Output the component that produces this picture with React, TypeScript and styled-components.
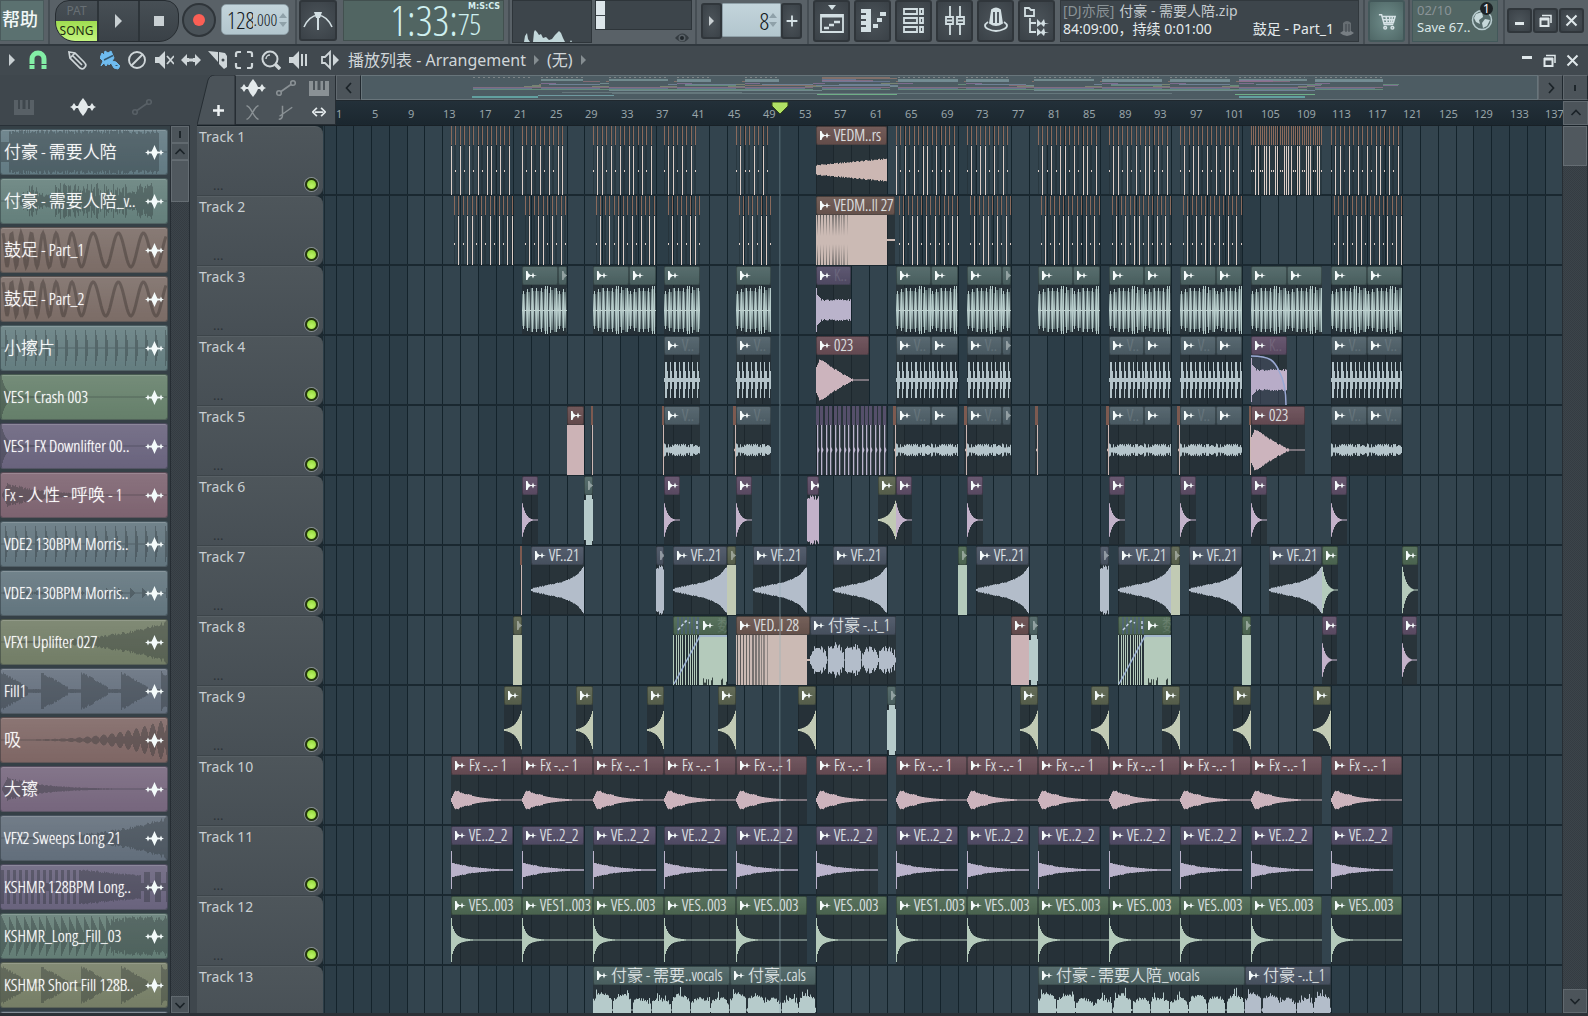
import React from "react";
import styled, { createGlobalStyle, css } from "styled-components";

const NARROW = '"Open Sans Condensed Light", "Open Sans Condensed", "Roboto Condensed", Roboto, "Noto Sans CJK SC", sans-serif';
const WIDE = '"Noto Sans", "Noto Sans CJK SC", sans-serif';

const BAR = 8.89;
const ORIGIN = 12.5;
const barX = (bar: number) => Math.round(ORIGIN + bar * BAR);

const GlobalStyle = createGlobalStyle`
  * { box-sizing: border-box; }
  body { margin: 0; background: #3f474d; font-family: ${WIDE}; color: #d3dadd; overflow: hidden; }
  button { font: inherit; color: inherit; padding: 0; border: 0; background: none; cursor: pointer; }
  input { font: inherit; color: inherit; padding: 0; border: 0; background: none; min-width: 0; outline: none; }
  svg { display: block; flex: none; }
  ul, ol { list-style: none; margin: 0; padding: 0; }
  h1 { margin: 0; font: inherit; }
`;

/* ------------------------------------------------------------------ */
/* Shell                                                               */
/* ------------------------------------------------------------------ */

const Shell = styled.div`
  height: 100vh;
  display: flex;
  flex-direction: column;
  background: #3f474d;
  border-bottom: 3px solid #2c3137;
  overflow: hidden;
`;

const TopBar = styled.header`
  display: flex;
  align-items: flex-start;
  height: 46px;
  flex: none;
  background: #596167;
  border-bottom: 2px solid #30383e;
`;

const Divider = styled.i`
  width: 2px;
  height: 44px;
  background: #464e54;
  flex: none;
`;

const HelpButton = styled.button`
  width: 44px;
  height: 41px;
  margin-right: 4px;
  padding: 0 4px 3px 0;
  background: #5b7170;
  border: 1px solid #4a5a5c;
  color: #f2f8f8;
  font-size: 18px;
  font-weight: 500;
  line-height: 34px;
  flex: none;
`;

const Transport = styled.div`
  display: flex;
  width: 124px;
  height: 42px;
  margin: 0 3px 0 5px;
  border: 1px solid #262c31;
  border-radius: 14px 14px 20px 20px;
  background: linear-gradient(#474f55, #3a4147);
  overflow: hidden;
  flex: none;
`;

const ModeSwitch = styled.div`
  display: flex;
  flex-direction: column;
  width: 41px;
  font-size: 12px;
  line-height: 20px;
`;

const ModeButton = styled.button<{ $on?: boolean }>`
  flex: 1;
  color: ${(p) => (p.$on ? "#1f2c12" : "#676f74")};
  background: ${(p) => (p.$on ? "linear-gradient(#9fdc50, #c3f57e)" : "none")};
`;

const TransportButton = styled.button`
  flex: 1;
  display: grid;
  place-items: center;
  border-left: 2px solid #2d3439;
`;

const RecordButton = styled.button`
  width: 34px;
  height: 34px;
  margin: 3px 5px 0 0;
  border: 2px solid #2f353a;
  border-radius: 50%;
  background: #4a5258;
  display: grid;
  place-items: center;
  flex: none;
`;

const ValueBox = styled.label<{ $w: number; $square?: boolean }>`
  display: flex;
  align-items: center;
  width: ${(p) => p.$w}px;
  height: ${(p) => (p.$square ? 34 : 31)}px;
  padding: 0 1px 0 5px;
  background: linear-gradient(#c3d4db, #b3c6ce);
  border: 1px solid #8fa0a8;
  border-radius: ${(p) => (p.$square ? 1 : 5)}px;
  color: #14191c;
  font-family: ${NARROW};
  font-weight: 300;
  flex: none;
`;

const ValueInput = styled.input<{ $size: number; $w: number; $right?: boolean }>`
  font-size: ${(p) => p.$size}px;
  width: ${(p) => p.$w}px;
  text-align: ${(p) => (p.$right ? "right" : "left")};
`;

const IconButton = styled.button<{ $w: number; $h?: number; $tone?: "teal" }>`
  width: ${(p) => p.$w}px;
  height: ${(p) => p.$h ?? 42}px;
  display: grid;
  place-items: center;
  background: ${(p) => (p.$tone ? "radial-gradient(#6f8d8b, #4f6766)" : "radial-gradient(#4c545a, #3a4147)")};
  border: 2px solid ${(p) => (p.$tone ? "#43585a" : "#30363b")};
  border-radius: 3px;
  color: #d6e2e6;
  flex: none;
`;

const MapButton = styled.button`
  width: 25px;
  height: 25px;
  display: grid;
  place-items: center;
  background: #4c545a;
  border: 1px solid #61696f;
  border-right-color: #20282e;
  flex: none;
`;

const TimePanel = styled.div`
  display: flex;
  align-items: flex-start;
  width: 161px;
  height: 41px;
  padding: 0 3px 0 0;
  background: #516562;
  border: 1px solid #42504f;
  color: #cff0f0;
  font-family: ${NARROW};
  font-weight: 300;
  font-size: 42px;
  line-height: 38px;
  justify-content: flex-end;
  flex: none;
`;

const TimeSide = styled.div`
  width: 42px;
  font-size: 29px;
  line-height: 26px;
`;

const TimeUnits = styled.div`
  font: bold 8px/9px "DejaVu Sans", sans-serif;
  text-align: right;
  padding-top: 1px;
  color: #d6eeee;
`;

const Scope = styled.div`
  width: 80px;
  height: 43px;
  background: #3d454b;
  border: 1px solid #2e353a;
  flex: none;
`;

const MeterColumn = styled.div`
  width: 97px;
  display: flex;
  flex-direction: column;
  align-items: flex-end;
  gap: 2px;
  flex: none;
`;

const Meter = styled.div`
  width: 97px;
  height: 30px;
  background: #3d454b;
  border: 1px solid #2e353a;
  display: flex;
  flex-direction: column;
  gap: 1px;
`;

const MeterCell = styled.i`
  width: 9px;
  height: 14px;
  background: #dde6ea;
`;

const Group = styled.div<{ $gap?: number; $pad?: string }>`
  display: flex;
  gap: ${(p) => p.$gap ?? 0}px;
  padding: ${(p) => p.$pad ?? "0"};
  flex: none;
`;

const HintPanel = styled.section`
  flex: 1;
  min-width: 0;
  height: 42px;
  margin-left: 5px;
  padding: 1px 3px 0 2px;
  background: #3d454b;
  border: 1px solid #31383d;
  font-size: 14px;
  line-height: 18px;
  white-space: nowrap;
  color: #c5cbcf;
`;

const HintRow = styled.div<{ $bright?: boolean }>`
  display: flex;
  align-items: center;
  height: 18px;
  gap: 5px;
  color: ${(p) => (p.$bright ? "#e4eaec" : "#c5cbcf")};
`;

const Dim = styled.span`
  color: #8a9397;
`;

const Spacer = styled.span`
  flex: 1;
`;

const SavePanel = styled.section`
  display: flex;
  width: 86px;
  height: 42px;
  padding: 1px 2px 0 4px;
  background: #526664;
  border: 1px solid #43585a;
  font-size: 13px;
  line-height: 17px;
  color: #dbe8e8;
  white-space: nowrap;
  flex: none;
`;

const SaveText = styled.div`
  width: 54px;
`;

const GlobeWrap = styled.div`
  position: relative;
  padding-top: 7px;
`;

const Badge = styled.span`
  position: absolute;
  top: 0;
  right: 0;
  width: 13px;
  height: 13px;
  border-radius: 50%;
  background: #1d2326;
  color: #fff;
  font-size: 12px;
  line-height: 13px;
  text-align: center;
`;

/* ------------------------------------------------------------------ */
/* Playlist title bar                                                  */
/* ------------------------------------------------------------------ */

const TitleBar = styled.nav`
  display: flex;
  align-items: center;
  height: 29px;
  padding: 0 4px 1px 5px;
  flex: none;
  background: #41494f;
  color: #cfd5d8;
`;

const Tool = styled.button<{ $w?: number; $tone?: string }>`
  width: ${(p) => p.$w ?? 27}px;
  height: 26px;
  display: grid;
  place-items: center;
  color: ${(p) => p.$tone ?? "#cfd6d9"};
  flex: none;
`;

const Crumb = styled.h1`
  font-size: 16px;
  line-height: 26px;
  white-space: nowrap;
  display: flex;
  align-items: center;
  gap: 8px;
  color: #d0d6d9;
`;

/* ------------------------------------------------------------------ */
/* Workspace                                                           */
/* ------------------------------------------------------------------ */

const Workspace = styled.main`
  flex: 1;
  min-height: 0;
  display: grid;
  grid-template-columns: 190px minmax(0, 1fr);
  column-gap: 7px;
  grid-template-rows: minmax(0, 1fr);
`;

const Picker = styled.aside`
  display: flex;
  flex-direction: column;
  min-height: 0;
`;

const PickerTabs = styled.div`
  display: flex;
  align-items: center;
  justify-content: space-between;
  height: 50px;
  padding: 14px 38px 0 14px;
  flex: none;
`;

const PlainButton = styled.button<{ $tone: string }>`
  color: ${(p) => p.$tone};
  display: grid;
  place-items: center;
`;

const PickerBody = styled.div`
  flex: 1;
  min-height: 0;
  display: grid;
  grid-template-columns: minmax(0, 1fr) 20px;
  border-top: 1px solid #283037;
`;

const PickerList = styled.ul`
  overflow: hidden;
  padding: 3px 2px 0 0;
  background: #354046;
  display: flex;
  flex-direction: column;
  gap: 3px;
`;

const PickerItem = styled.button<{ $c: string }>`
  position: relative;
  display: flex;
  align-items: center;
  width: 100%;
  height: 46px;
  padding: 0 3px 0 3px;
  border: 1px solid rgba(20, 30, 34, 0.35);
  border-radius: 3px;
  background: linear-gradient(rgba(255, 255, 255, 0.1), rgba(255, 255, 255, 0)) ${(p) => p.$c};
  box-shadow: inset 0 1px 0 rgba(255, 255, 255, 0.15);
  color: #ffffff;
  font-family: ${NARROW};
  font-weight: 300;
  font-size: 17px;
  line-height: 24px;
  text-shadow: 0 0 1px rgba(255, 255, 255, 0.8);
  text-align: left;
`;

const PickerWave = styled.svg`
  position: absolute;
  inset: 0;
  width: 100%;
  height: 100%;
`;

const PickerName = styled.span`
  position: relative;
  flex: 1;
  white-space: nowrap;
`;

const OnTop = styled.span`
  position: relative;
`;

const Scroll = styled.div<{ $w: number }>`
  width: ${(p) => p.$w}px;
  display: flex;
  flex-direction: column;
  background: repeating-conic-gradient(#353c42 0 25%, #3c444a 0 50%) 0 0 / 2px 2px;
  border-left: 1px solid #262d33;
  border-right: 1px solid #262d33;
`;

const ScrollButton = styled.button<{ $h: number; $w?: number }>`
  height: ${(p) => p.$h}px;
  ${(p) => p.$w && css`width: ${p.$w}px;`}
  background: #4c545a;
  border: 1px solid #61696f;
  box-shadow: 0 1px 0 #262d33;
  color: #1e262b;
  display: grid;
  place-items: center;
  flex: none;
`;

const Thumb = styled.div<{ $h: number }>`
  height: ${(p) => p.$h}px;
  background: #50585e;
  border: 1px solid #656d73;
  flex: none;
`;

const Playlist = styled.section`
  display: flex;
  flex-direction: column;
  min-width: 0;
  min-height: 0;
`;

const PlaylistHead = styled.div`
  display: grid;
  grid-template-columns: 38px 101px minmax(0, 1fr);
  height: 50px;
  flex: none;
`;

const AddTrack = styled.button`
  position: relative;
  color: #eef2f3;
`;

const TabShape = styled.svg`
  position: absolute;
  left: 0;
  top: 0;
`;

const PlusMark = styled.svg`
  position: relative;
  margin: 20px auto 0 16px;
`;

const ToolGrid = styled.div`
  display: grid;
  grid-template-columns: repeat(3, 1fr);
  grid-template-rows: 1fr 1fr;
  place-items: center;
  background: #4b5359;
  border: 1px solid #262d33;
  border-top-color: #666e74;
`;

const HeadRight = styled.div`
  display: flex;
  flex-direction: column;
  min-width: 0;
`;

const MinimapRow = styled.div`
  display: flex;
  height: 26px;
  border-bottom: 1px solid #20282e;
`;

const Minimap = styled.div`
  flex: 1;
  min-width: 0;
  overflow: hidden;
  background: #4d5c63;
  border: 1px solid #68757b;
`;

const RulerRow = styled.div`
  display: flex;
  height: 24px;
`;

const Ruler = styled.ol`
  position: relative;
  flex: 1;
  min-width: 0;
  overflow: hidden;
  background: linear-gradient(#233039, #1b272f);
  color: #98a4a9;
  font-size: 11px;
  line-height: 25px;
`;

const RulerMark = styled.li`
  position: absolute;
  top: 0;
`;

const Marker = styled.svg`
  position: absolute;
  top: 1px;
`;

const PlaylistBody = styled.div`
  flex: 1;
  min-height: 0;
  display: grid;
  grid-template-columns: minmax(0, 1fr) 26px;
  border-top: 1px solid #182127;
`;

const Canvas = styled.div`
  position: relative;
  overflow: hidden;
  background: #1c2930;
`;

const Backdrop = styled.svg`
  position: absolute;
  left: 126px;
  top: 0;
`;

const TrackRow = styled.div`
  display: grid;
  grid-template-columns: 126px minmax(0, 1fr);
  height: 70px;
`;

const TrackHead = styled.div`
  display: flex;
  flex-direction: column;
  justify-content: space-between;
  padding: 0 5px 4px 2px;
  background: linear-gradient(#4e565b, #474f55);
  border-top: 1px solid #575f64;
  border-bottom: 1px solid #3c4449;
  border-radius: 0 8px 8px 0;
  font-size: 14px;
  line-height: 20px;
  color: #c9cfd2;
`;

const TrackFoot = styled.div`
  display: flex;
  align-items: flex-end;
  justify-content: space-between;
  padding-left: 14px;
  color: #2c3338;
  font-size: 13px;
  line-height: 12px;
`;

const Led = styled.button`
  width: 13px;
  height: 13px;
  border-radius: 50%;
  background: radial-gradient(circle at 50% 70%, #c0f56a, #86d22f);
  border: 2px solid #23340f;
  box-shadow: 0 0 0 1px #8a9195;
`;

const Lane = styled.div`
  position: relative;
  border-bottom: 2px solid #1a2830;
`;

const ClipBox = styled.div`
  position: absolute;
  top: 0;
  height: 69px;
  overflow: hidden;
  background: rgba(36, 42, 46, 0.62);
`;

const ClipHead = styled.div<{ $c: string; $dim?: boolean }>`
  display: flex;
  align-items: center;
  gap: 3px;
  height: 19px;
  padding-left: 3px;
  border: 1px solid rgba(15, 22, 26, 0.35);
  border-radius: 2px;
  background: linear-gradient(rgba(255, 255, 255, 0.05), rgba(0, 0, 0, 0.08)) ${(p) => p.$c};
  color: #e6eced;
  font-family: ${NARROW};
  font-weight: 300;
  font-size: 16px;
  line-height: 17px;
  text-shadow: 0 0 1px rgba(230, 236, 237, 0.5);
  white-space: nowrap;
  svg { opacity: ${(p) => (p.$dim ? 0.4 : 1)}; }
`;

const ThinHead = styled.div<{ $c: string }>`
  height: 19px;
  background: ${(p) => p.$c};
`;

const ClipName = styled.span<{ $faint?: boolean }>`
  opacity: ${(p) => (p.$faint ? 0.14 : 1)};
`;

const Hits = styled.svg`
  position: absolute;
  top: 0;
`;

const Playhead = styled.i`
  position: absolute;
  top: 0;
  bottom: -2px;
  width: 2px;
  background: rgba(150, 175, 185, 0.3);
`;

/* ------------------------------------------------------------------ */
/* Icons                                                               */
/* ------------------------------------------------------------------ */

const Tri = ({ s = 6, c = "#c9d0d3" }: { s?: number; c?: string }) => (
  <svg width={s} height={s * 2} viewBox="0 0 6 12"><path d="M0 0L6 6L0 12Z" fill={c} /></svg>
);

const Spin = () => (
  <svg width="8" height="16" viewBox="0 0 8 16"><path d="M0 6L4 1L8 6ZM0 10H8L4 15Z" fill="#8fa1a9" /></svg>
);

const WaveIcon = ({ w = 20 }: { w?: number }) => (
  <svg width={w} height="18" viewBox="0 0 26 18" preserveAspectRatio="none" fill="currentColor">
    <path d="M0 9L2 8L4 5L6 8L8 8L10 4L13 0L16 4L18 8L20 8L22 5L24 8L26 9L24 10L22 13L20 10L18 10L16 14L13 18L10 14L8 10L6 10L4 13L2 10Z" />
  </svg>
);

const PickWave = () => (
  <svg width="19" height="15" viewBox="0 0 19 15" fill="#f4fbfb">
    <path d="M0 7.5L2 6.7L3 4.5L4 6.7L6.5 6.5L8 3.5L9.5 0L11 3.5L12.5 6.5L15 6.7L16 4.5L17 6.7L19 7.5L17 8.3L16 10.5L15 8.3L12.5 8.5L11 11.5L9.5 15L8 11.5L6.5 8.5L4 8.3L3 10.5L2 8.3Z" />
  </svg>
);

const ClipIcon = () => (
  <svg width="11" height="9" viewBox="0 0 11 9" fill="#f4fafa">
    <path d="M0 0H1.500L2.500 2.500L4.500 4H6L7 1.500L8 4L11 4.500L8 5L7 7.500L6 5H4.500L2.500 6.500L1.500 9H0Z" />
  </svg>
);

const AutoIcon = () => (
  <svg width="20" height="18" viewBox="0 0 20 18" fill="none" stroke="currentColor" strokeWidth="1.6">
    <circle cx="3" cy="14" r="2.3" /><circle cx="17" cy="4" r="2.3" /><path d="M5 12.5L15 5.5" />
  </svg>
);

const PianoIcon = () => (
  <svg width="20" height="15" viewBox="0 0 20 15" fill="currentColor">
    <path d="M0 0H4V9H6V0H8.500V9H11.500V0H14V9H16V0H20V15H0Z" />
  </svg>
);

const Chevron = ({ d }: { d: string }) => (
  <svg width="12" height="12" viewBox="0 0 12 12" fill="none" stroke="#1b2328" strokeWidth="1.700"><path d={d} /></svg>
);
const UP = "M1.500 8L6 3.500L10.500 8";
const DOWN = "M1.500 4L6 8.500L10.500 4";
const LEFT = "M8 1L3.500 6L8 11";
const RIGHT = "M4 1L8.500 6L4 11";

const Stroke = ({ s = 20, w = 2, children }: { s?: number; w?: number; children: React.ReactNode }) => (
  <svg width={s} height={s} viewBox="0 0 20 20" fill="none" stroke="currentColor" strokeWidth={w}>{children}</svg>
);

const WindowIcon = ({ kind }: { kind: "min" | "max" | "close" }) => (
  <svg width="13" height="13" viewBox="0 0 13 13" fill="none" stroke="#dfe7ea" strokeWidth="2">
    {kind === "min" && <path d="M2 9.500H11" strokeWidth="3" />}
    {kind === "max" && <><path d="M3 1.500H12V9" strokeWidth="1.500" /><path d="M1.500 5H9.500V12H1.500Z" /><path d="M1 5H10" strokeWidth="3" /></>}
    {kind === "close" && <path d="M1.500 1.500L11.500 11.500M11.500 1.500L1.500 11.500" />}
  </svg>
);

const SpeakerShape = <path d="M1 7H5L11 1V19L5 13H1Z" fill="currentColor" stroke="none" />;

const TOOLS: { name: string; w: number; tone?: string; icon: React.ReactNode }[] = [
  { name: "选项", w: 14, icon: <Tri /> },
  { name: "吸附", w: 38, tone: "#83eea6", icon: <Stroke w={5}><path d="M4 19V9a6 6 0 0 1 12 0V19" /><path d="M1 14.500H7M13 14.500H19" stroke="#41494f" strokeWidth="1.200" /></Stroke> },
  { name: "绘制", w: 40, icon: <Stroke w={1.7}><path d="M2 2L3 8L13 18Q16 20 18 17Q20 15 17 12L8 3Z" /><path d="M6 6L15 15M3 8L8 3" /></Stroke> },
  { name: "刷子", w: 26, tone: "#6fbcf0", icon: <Stroke w={1}><path d="M0 8L2 3L4 5L5 1L8 3L11 1L14 8L12 11L16 12L20 16L18 19L14 18L11 13L9 15L8 13L6 16L4 13L1 16L3 11Z" fill="currentColor" /><path d="M4 10L13 5.500" stroke="#33566d" strokeWidth="1.400" /><path d="M15.500 15.500H17.500" stroke="#33566d" /></Stroke> },
  { name: "删除", w: 27, icon: <Stroke w={1.9}><circle cx="10" cy="10" r="8" /><path d="M4.500 15.500L15.500 4.500" /></Stroke> },
  { name: "静音", w: 27, icon: <Stroke w={1.8}>{SpeakerShape}<path d="M13 6L20 14M20 6L13 14" /></Stroke> },
  { name: "滑移", w: 27, icon: <Stroke><path d="M0 10L6 4V8H8V12H6V16ZM20 10L14 4V8H12V12H14V16Z" fill="currentColor" stroke="none" /><path d="M8 10H12" strokeWidth="3" /></Stroke> },
  { name: "切片", w: 27, icon: <Stroke w={1.6}><path d="M0 1L10 12V2Z" fill="currentColor" stroke="none" /><path d="M11 2L17 3L19 6V17L16 19L11 14Z" fill="currentColor" stroke="none" /><circle cx="15" cy="10" r="1.500" fill="#41494f" stroke="none" /></Stroke> },
  { name: "选择", w: 26, icon: <Stroke w={2.2}><path d="M2 7V4Q2 2 4 2H7M13 2H16Q18 2 18 4V7M18 13V16Q18 18 16 18H13M7 18H4Q2 18 2 16V13" /></Stroke> },
  { name: "缩放", w: 27, icon: <Stroke w={2}><circle cx="9" cy="9" r="7.500" /><path d="M5 9A4 4 0 0 1 9 5" strokeWidth="1.400" /><path d="M14.500 14.500L19 19" strokeWidth="3.500" /></Stroke> },
  { name: "回放", w: 27, icon: <Stroke w={2}>{SpeakerShape}<path d="M14 4V16M18 4V16" /></Stroke> },
];

const MixBtn = ({ children, name }: { children: React.ReactNode; name: string }) => (
  <IconButton $w={37} aria-label={name}>
    <svg width="28" height="32" viewBox="0 0 28 32" fill="none" stroke="#d3dfe3" strokeWidth="1.800">{children}</svg>
  </IconButton>
);

/* ------------------------------------------------------------------ */
/* Wave forms                                                          */
/* ------------------------------------------------------------------ */

const noise = (i: number, seed = 1) => {
  const v = Math.sin(i * 12.9898 + seed * 78.233) * 43758.5453;
  return v - Math.floor(v);
};

type Env = (x: number, w: number) => number;

const lumps = (t: number, n: number, seed: number) => {
  const k = Math.floor(t * n);
  const f = t * n - k;
  const amp = 0.65 + 0.35 * noise(k, seed);
  return f > 0.93 ? 0.03 : amp * Math.pow(Math.sin(Math.PI * Math.min(1, f * 0.85 + 0.12)), 0.45);
};

const ENVELOPES: Record<string, Env> = {
  riser: (x, w) => 4 + 6.5 * (x / w) + noise(x) * 1.5,
  block: () => 25,
  bump: (x, w) => (x < 2 ? 20 : x > w - 2 ? 21 : 25),
  rough: (x) => 20 + noise(x, 3) * 5,
  kick: (x, w) => (x < 1 ? 22 : x < w * 0.12 ? 16 - x : 9 + noise(x, 4) * 2),
  crash: (x, w) => {
    const t = x / w;
    if (t > 0.69) return 0.5;
    return (t < 0.07 ? 13 + t * 110 : 20 * Math.pow(1 - (t - 0.07) / 0.63, 1.2)) + noise(x, 5) * 1.5;
  },
  hat: (x) => {
    const f = (x % 4.45) / 4.45;
    return f > 0.2 && f < 0.5 ? 18 : f >= 0.5 && f < 0.75 ? 9 : 2;
  },
  shaker: (x) => 2.5 + noise(x, 6) * 4,
  sweep: (x, w) => { const t = x / w; return 1 + 11 * t + 12 * Math.pow(t, 6) + noise(x, 7); },
  decay: (x, w) => Math.max(0.5, 17 * Math.exp((-4.5 * x) / w) - 0.3),
  tall: (x, w) => Math.max(0.5, 24 * Math.exp((-4 * x) / w) - 0.8),
  attack: (x, w) => 23 * Math.exp(-3.2 * (1 - x / w)),
  sliver: (x, w) => (x >= w - 1 ? 25 : 4 * (x / w)),
  fx: (x, w) => {
    const t = x / w;
    if (t < 0.05) return 2 + t * 150;
    return Math.max(0.5, 10.5 * Math.exp(-3.3 * (t - 0.05)) - 0.6 + (t < 0.3 ? noise(x, 8) * 1.5 - 0.5 : 0));
  },
  down: (x, w) => { const t = x / w; return x < 1 ? 19 : Math.max(0.7, 7.5 * Math.exp(-2.6 * t) + noise(x, 9) * (1 - t) * 1.2 - 0.4); },
  ves: (x, w) => { const t = x / w; return x < 1 ? 22 : Math.max(0.5, 13 * Math.exp(-22 * t) + 5 * Math.exp(-6 * t) - 0.2); },
  part: (x, w) => Math.max(0.5, lumps(x / w, 5, 4) * 16 + noise(x, 2) * 7 - 3.5),
  vocals: (x, w) => Math.max(0.5, lumps(x / w, Math.max(3, Math.round(w / 19)), 6) * 16 + noise(x, 11) * 4 + (noise(x, 12) > 0.95 ? 6 : 0) - 2),
};

const columns = (w: number, env: Env, mid = 25) => {
  let up = `M0 ${mid}`;
  let down = "";
  for (let x = 0; x < w; x++) {
    const h = Number(Math.min(25, env(x, w)).toFixed(1));
    up += `L${x} ${mid - h}H${x + 1}`;
    down = `L${x + 1} ${mid + h}H${x}` + down;
  }
  return up + down + "Z";
};

const Wave = ({ kind, w, c }: { kind: string; w: number; c: string }) => {
  if (kind === "loop") {
    return (
      <svg width={w} height="50" viewBox={`0 0 ${w} 50`} shapeRendering="crispEdges">
        <defs>
          <linearGradient id="loopShade" x1="0" x2="0" y1="0" y2="1">
            <stop offset="0" stopColor="#5f7274" /><stop offset="0.5" stopColor="#b4c9c8" /><stop offset="1" stopColor="#5f7274" />
          </linearGradient>
        </defs>
        {Array.from({ length: w }, (_, x) => {
          const p = x % 36;
          const bright = [1, 5, 10, 14, 19, 23, 25, 28, 34].includes(p);
          const gap = [3, 8, 12, 17, 21, 26, 31].includes(p);
          const h = (bright ? 19 : 16) + Math.round(noise(Math.floor(p / 2), 2) * 6);
          return <rect key={x} x={x} y={25 - h} width="1" height={h * 2} fill={bright ? "#b6cbca" : "url(#loopShade)"} opacity={gap ? 0.25 : 1} />;
        })}
        <rect y="25" width={w} height="1" fill="#bfd2d0" />
      </svg>
    );
  }
  if (kind === "fill" || kind === "fill2") {
    const cut = kind === "fill" ? Math.round(w * 0.4) : Math.round(w * 0.45);
    const end = kind === "fill" ? w - 8 : w - 3;
    return (
      <svg width={w} height="50" viewBox={`0 0 ${w} 50`} shapeRendering="crispEdges">
        <defs>
          <linearGradient id="fillShade" x1="0" x2="0" y1="0" y2="1">
            <stop offset="0" stopColor="#3a3d3e" /><stop offset="0.42" stopColor="#3a3d3e" stopOpacity="0" />
            <stop offset="0.58" stopColor="#3a3d3e" stopOpacity="0" /><stop offset="1" stopColor="#3a3d3e" />
          </linearGradient>
        </defs>
        <rect width={end} height="50" fill={c} />
        {Array.from({ length: cut }, (_, x) => (x % 3 === 1 || noise(x, 8) > 0.85) && (
          <rect key={x} x={x} width="1" height="50" fill={kind === "fill" ? "url(#fillShade)" : "#3a3d3e"} opacity={0.85 - (0.5 * x) / cut} />
        ))}
        <rect x={end} y="24" width={w - end} height="2" fill={c} />
      </svg>
    );
  }
  if (kind === "build") {
    const cut = Math.round(w / 2);
    return (
      <svg width={w} height="50" viewBox={`0 0 ${w} 50`}>
        <rect x={cut - 1} width={w} height="50" fill={c} />
        {[0, 3, 5, 7, 9, 12, 15, 17, 19, 21, 23].map((x) => <rect key={x} x={x} width="1" height="50" fill={c} />)}
        {Array.from({ length: w - cut }, (_, i) => noise(i, 3) > 0.55 && <rect key={i} x={cut + i} y={49 - noise(i, 5) * 7} width="1" height="9" fill="#34413f" />)}
        <path d={`M1 49L${cut} 1H${w}`} stroke="#9db1d4" strokeWidth="1.500" fill="none" />
      </svg>
    );
  }
  if (kind === "slices") {
    return (
      <svg width={w} height="50" viewBox={`0 0 ${w} 50`}>
        {Array.from({ length: Math.round(w / 4.45) }, (_, i) => (
          <path key={i} d={`M${Math.round(1 + i * 4.45)} 0h1.300v22l1.200 3l-1.200 3v22h-1.300z`} fill={c} />
        ))}
      </svg>
    );
  }
  return (
    <svg width={w} height="50" viewBox={`0 0 ${w} 50`}>
      <path d={columns(w, kind === "curve" ? ENVELOPES.kick : ENVELOPES[kind])} fill={c} />
      {kind === "hat" && <rect y="24.500" width={w} height="1" fill={c} />}
      {kind === "curve" && (
        <>
          <path d={`M0 0C${w * 0.55} 0 ${w * 0.7} 8 ${w * 0.78} 16C${w * 0.95} 26 ${w} 40 ${w} 50H0Z`} fill="#8a8fc0" opacity="0.18" />
          <path d={`M0 1C${w * 0.55} 1 ${w * 0.65} 6 ${w * 0.78} 16C${w * 0.93} 26 ${w - 1} 40 ${w - 1} 50`} stroke="#9aa9d4" strokeWidth="1.500" fill="none" />
        </>
      )}
    </svg>
  );
};

/* ------------------------------------------------------------------ */
/* Arrangement                                                         */
/* ------------------------------------------------------------------ */

const COLORS: Record<string, [string, string]> = {
  teal: ["#4f6666", "#b6cbcb"],
  hat: ["#50616a", "#b4c4ca"],
  brown: ["#6d5851", "#cbbab4"],
  clay: ["#6b5350", "#ccb7b3"],
  rose: ["#6b4f58", "#ccb4bd"],
  red: ["#6a4f51", "#ccb3b6"],
  violet: ["#554f6a", "#bab3cb"],
  plum: ["#604f69", "#c3b2ca"],
  slate: ["#4c5666", "#b3bdca"],
  olive: ["#5c6550", "#c1cab4"],
  green: ["#506b55", "#b4cabb"],
};

type Clip = { a: number; b: number; kind: string; color: string; name?: string; faint?: boolean };
const clip = (a: number, b: number, kind: string, color: string, name?: string, faint?: boolean): Clip => ({ a, b, kind, color, name, faint });

const SECTIONS = [13, 21, 29, 37, 45, 54, 63, 71, 79, 87, 95, 103, 112];
const pairs = (list: number[][], kind: string, color: string, name?: string) =>
  list.map(([a, b]) => clip(a, b, kind, color, b - a > 3 ? name : undefined, true));

const UPPER = [[37, 41], [45, 49], [63, 67], [67, 70], [71, 75], [75, 76], [87, 91], [91, 94], [95, 99], [99, 102], [112, 116], [116, 120]];

type Track = { clips: Clip[]; hits?: { at: number; seq: string; step?: number }[] };

const TRACKS: Track[] = [
  {
    clips: [clip(54, 62, "riser", "clay", "VEDM..rs")],
    hits: [
      { at: 13, seq: "TdTdTdTdTTdTdT" }, { at: 21, seq: "TdTdTdTdTT" }, { at: 29, seq: "dTTdTdTdTTdTdT" },
      { at: 37, seq: "dTTdTdTd" }, { at: 45, seq: "dTddTdTd" }, { at: 63, seq: "TdTdTdTTdTdTdT" },
      { at: 71, seq: "dTdTTdTdTd" }, { at: 79, seq: "dTdTdTTdTdTTdT" }, { at: 87, seq: "dTTdTdTdTTdTdT" },
      { at: 95, seq: "dTdTTdTdTdTTdT" }, { at: 103, seq: "ddTTddTTTddTTddTTTTddTTddTTTddTTd", step: 2.2 }, { at: 112, seq: "dTTdTdTdTdTTdTdT" },
    ],
  },
  {
    clips: [clip(54, 62.9, "fill", "brown", "VEDM..ll 27")],
    hits: [
      { at: 13.35, seq: "dTdTTdTdTdTdTT" }, { at: 21.35, seq: "dTdTTdTdTd" }, { at: 29.35, seq: "dTdTdTTdTdTdTT" },
      { at: 37.35, seq: "dTdTdTTd" }, { at: 45.35, seq: "dTdTdTTd" }, { at: 63.35, seq: "dTdTTdTdTdTdTT" },
      { at: 71.35, seq: "dTdTTdTdTd" }, { at: 79.35, seq: "dTdTdTTdTdTdTd" }, { at: 87.35, seq: "dTdTdTTdTdTdTd" },
      { at: 95.35, seq: "dTdTdTTdTdTdTd" }, { at: 112.35, seq: "dTdTdTTdTdTdTdTT" },
    ],
  },
  {
    clips: [
      ...pairs([[21, 25], [25, 26], [29, 33], [33, 36], [79, 83], [83, 86], [103, 107], [107, 111], ...UPPER], "loop", "teal"),
      clip(54, 58, "kick", "violet", "K..", true),
    ],
  },
  { clips: [...pairs(UPPER, "hat", "hat", "V.."), clip(54, 60, "crash", "rose", "023"), clip(103, 107, "curve", "plum", "K..", true)] },
  {
    clips: [
      clip(26, 28, "block", "red"), clip(54, 62, "slices", "violet"), ...pairs(UPPER, "shaker", "hat", "V.."),
      ...[29, 37, 45, 63, 71, 79, 87, 95, 103].map((s) => clip(s - 0.3, s, "sliver", "clay")),
      clip(103, 109, "crash", "rose", "023"),
    ],
  },
  {
    clips: [
      ...[21, 37, 45, 63, 71, 87, 95, 103, 112].map((s) => clip(s, s + 1.8, "decay", "plum")),
      clip(28, 29, "bump", "teal"), clip(53, 54.4, "rough", "plum"), clip(61, 63, "attack", "olive"),
    ],
  },
  {
    clips: [
      clip(20.8, 21, "sliver", "clay"), clip(36, 37, "rough", "slate"), clip(44, 45, "block", "olive"),
      clip(70, 71, "block", "green"), clip(86, 87, "rough", "slate"), clip(94, 95, "block", "olive"),
      ...[22, 38, 47, 56, 72, 88, 96, 105].map((s) => clip(s, s + 6, "sweep", "slate", "VF..21")),
      clip(111, 112.8, "tall", "green"), clip(120, 121.8, "tall", "green"),
    ],
  },
  {
    clips: [
      clip(20, 21, "block", "olive"), clip(38, 44, "build", "green"), clip(45, 53.4, "fill2", "brown", "VED..l 28"),
      clip(53.4, 63, "part", "slate", "付豪 -..t_1"), clip(76, 78, "block", "red"), clip(78, 79, "bump", "teal"),
      clip(88, 94, "build", "green"), clip(102, 103, "block", "green"),
      clip(111, 112.7, "decay", "plum"), clip(120, 121.7, "decay", "plum"),
    ],
  },
  {
    clips: [
      ...[21, 29, 37, 45, 54, 79, 87, 95, 103, 112].map((s) => clip(s - 2, s, "attack", "olive")),
      clip(62, 63, "bump", "teal"),
    ],
  },
  { clips: SECTIONS.map((s) => clip(s, s + 8, "fx", "rose", "Fx -..- 1")) },
  { clips: SECTIONS.map((s) => clip(s, s + 7, "down", "violet", "VE..2_2")) },
  { clips: SECTIONS.map((s) => clip(s, s + 8, "ves", "green", s === 21 || s === 63 ? "VES1..003" : "VES..003")) },
  {
    clips: [
      clip(29, 44.4, "vocals", "teal", "付豪 - 需要..vocals"), clip(44.4, 54, "vocals", "teal", "付豪..cals"),
      clip(79, 102.3, "vocals", "teal", "付豪 - 需要人陪_vocals"), clip(102.3, 112, "vocals", "slate", "付豪 -..t_1"),
    ],
  },
];

const ClipView = ({ c }: { c: Clip }) => {
  const left = barX(c.a);
  const w = Math.max(2, barX(c.b) - left);
  const [head, wave] = COLORS[c.color];
  return (
    <ClipBox style={{ left, width: w }}>
      {c.kind === "slices" ? (
        <svg width={w} height="19">
          {Array.from({ length: Math.round(w / 4.45) }, (_, i) => <rect key={i} x={Math.round(i * 4.45)} width="3" height="19" fill={head} />)}
        </svg>
      ) : c.kind === "build" ? (
        <ClipHead $c={head}>
          <svg width="23" height="17" viewBox="0 0 23 17" fill="none">
            <path d="M1 0V17M5 0V17M9 0V17M13 0V17M17 0V17M21 0V17" stroke="#4b5f8c" />
            <path d="M1 13L9 4L13 6M20 4V12" stroke="#c7d3ea" strokeWidth="1.500" strokeDasharray="3 2" />
          </svg>
          <ClipIcon />
          <ClipName $faint>数</ClipName>
        </ClipHead>
      ) : w < 5 ? (
        <ThinHead $c="#7d5a50" />
      ) : (
        <ClipHead $c={head} $dim={w < 12}>
          <ClipIcon />
          {c.name && <ClipName $faint={c.faint}>{c.name}</ClipName>}
        </ClipHead>
      )}
      <Wave kind={c.kind} w={w} c={wave} />
    </ClipBox>
  );
};

const HitView = ({ at, seq, step = 4.45, row }: { at: number; seq: string; step?: number; row: number }) => {
  const left = barX(at);
  const w = Math.ceil(seq.length * step) + 1;
  return (
    <Hits style={{ left }} width={w} height="69" viewBox={`0 0 ${w} 69`} shapeRendering="crispEdges">
      {seq.split("").map((s, i) => {
        const x = Math.round(i * step);
        return (
          <g key={i}>
            <rect x={x - 1} width="2" height="69" fill="#1f2b32" opacity="0.5" />
            <rect x={x} width="1" height="19" fill="#8a6a5c" />
            {s === "T" ? <rect x={x} y="20" width="1" height="49" fill="#dccdc6" /> : <rect x={x} y={row ? 47 : 44} width="1" height="2" fill="#dccdc6" />}
          </g>
        );
      })}
    </Hits>
  );
};

const Grid = () => (
  <Backdrop width="2600" height="1400" shapeRendering="crispEdges">
    <rect width="13" height="1400" fill="#2c3d47" />
    {Array.from({ length: 36 }, (_, i) => (
      <rect key={i} x={barX(i * 8)} width={72} height="1400" fill={i % 2 ? "#33444e" : "#2c3d47"} />
    ))}
    {Array.from({ length: 146 }, (_, i) => <rect key={i} x={barX(i * 2)} width="1" height="1400" fill="#14232b" />)}
    <rect x="1" width="1" height="1400" fill="#1b2a32" />
  </Backdrop>
);

const MINI: Record<string, string> = {
  teal: "#7d9a9c", hat: "#768e96", brown: "#96786e", clay: "#96786e", rose: "#94728a", red: "#94707a",
  violet: "#6c7c9e", plum: "#8d739c", slate: "#7a8ea4", olive: "#87927a", green: "#6d9a83",
};

const MiniMap = () => (
  <svg width="2200" height="24" shapeRendering="crispEdges">
    {TRACKS.map((t, i) => (
      <g key={i}>
        {t.hits?.filter(() => i === 0).map((h) => (
          <path key={h.at} d={`M${h.at * 8.51} 1.500h${h.seq.length * (h.step ? 2 : 4.2)}`} stroke="#7d8487" strokeDasharray="2 3" />
        ))}
        {t.clips.map((c, j) => (
          <rect key={j} x={c.a * 8.51} y={1 + Math.round(i * 1.1)} width={(c.b - c.a) * 8.51} height={i === 2 || i === 3 ? 2 : 1} fill={MINI[c.color]} opacity="0.75" />
        ))}
      </g>
    ))}
    <path d="M110 20.500h66M877 20.500h66" stroke="#62a0a0" strokeWidth="2" />
    <path d="M455 18.500h80M873 18.500h80" stroke="#6fae86" />
    <path d="M176 19.500h76" stroke="#6f9aa0" />
    <path d="M200 16.500h180M250 17.500h560" stroke="#65777c" />
  </svg>
);

/* ------------------------------------------------------------------ */
/* Picker                                                              */
/* ------------------------------------------------------------------ */

type PickKind = "full" | "speech" | "sine" | "ticks" | "hit" | "decay" | "grow" | "chop" | "dense" | "comb" | "burst" | "late";
const PICKS: { name: string; c: string; wave: PickKind }[] = [
  { name: "付豪 - 需要人陪", c: "#627a83", wave: "full" },
  { name: "付豪 - 需要人陪_v..", c: "#647f7b", wave: "speech" },
  { name: "鼓足 - Part_1", c: "#7b6c66", wave: "sine" },
  { name: "鼓足 - Part_2", c: "#7b6c66", wave: "sine" },
  { name: "小擦片", c: "#647d80", wave: "ticks" },
  { name: "VES1 Crash 003", c: "#657f6a", wave: "hit" },
  { name: "VES1 FX Downlifter 00..", c: "#69637d", wave: "hit" },
  { name: "Fx - 人性 - 呼唤 - 1", c: "#7d6370", wave: "decay" },
  { name: "VDE2 130BPM Morris..", c: "#62757e", wave: "ticks" },
  { name: "VDE2 130BPM Morris..", c: "#62757e", wave: "late" },
  { name: "VFX1 Uplifter 027", c: "#727d66", wave: "grow" },
  { name: "Fill1", c: "#646f7d", wave: "chop" },
  { name: "吸", c: "#7e6664", wave: "burst" },
  { name: "大镲", c: "#76667d", wave: "decay" },
  { name: "VFX2 Sweeps Long 21", c: "#626e7b", wave: "grow" },
  { name: "KSHMR 128BPM Long..", c: "#69637d", wave: "dense" },
  { name: "KSHMR_Long_Fill_03", c: "#637d75", wave: "comb" },
  { name: "KSHMR Short Fill 128B..", c: "#767e66", wave: "chop" },
  { name: "", c: "#626e7b", wave: "hit" },
];

const PICK_ENV: Record<Exclude<PickKind, "sine">, Env> = {
  full: (x) => (x < 8 ? 10 : x > 157 ? 0.4 : 18 + noise(x) * 5),
  speech: (x) => (x > 18 && x < 152 ? 4 + noise(x, 3) * (noise(Math.floor(x / 9), 5) > 0.4 ? 14 : 6) : 0.4),
  ticks: (x) => { const f = (x + 6) % 10; return f < 3 ? 18 - f * 5 : 0.4; },
  hit: (x) => Math.max(0.4, 18 * Math.exp(-x / 4) + 3 * Math.exp(-x / 30)),
  decay: (x) => (x < 6 ? x * 1.8 : Math.max(0.4, (9 + noise(x) * 4) * Math.exp(-(x - 6) / 35))),
  late: (x) => (x < 105 ? 0.5 + noise(x, 2) * 2 : Math.max(0.4, 5 - ((x - 105) % 12))),
  grow: (x) => 0.6 + 17 * Math.pow(x / 166, 3) + noise(x, 4) * 4 * (x / 166),
  chop: (x) => { const f = x % 40; return Math.max(0.4, (f < 27 ? 20 - f * 0.6 : 2) * (0.85 + 0.15 * noise(x, 7))); },
  dense: (x) => (x < 80 ? (x % 6 < 3 ? 17 : 4) : x < 140 ? 16 - (x - 80) * 0.1 + noise(x, 3) * 2 : x % 11 < 6 ? 15 : 4),
  comb: (x) => (x < 110 ? 20 - (x % 7.5) * 2.3 : 14 + noise(x, 3) * 6),
  burst: (x) => 0.5 + 21 * Math.pow(x / 166, 3) * (0.25 + 0.75 * Math.abs(Math.sin(x / 2.6))),
};

const sinePath = () => {
  let d = "";
  let phase = 1;
  for (let x = 2; x < 166; x++) {
    phase += 0.75 - 0.5 * Math.min(1, x / 90);
    d += `${x === 2 ? "M" : "L"}${x} ${(22 - 17 * Math.sin(phase)).toFixed(1)}`;
  }
  return d;
};

const PickerShape = ({ kind }: { kind: PickKind }) => (
  <PickerWave viewBox="0 0 166 44" preserveAspectRatio="none">
    {kind === "sine"
      ? <path d={sinePath()} fill="none" stroke="#2a2623" strokeWidth="3" opacity="0.35" />
      : <path d={columns(166, PICK_ENV[kind], 22)} fill="#22282a" opacity="0.32" />}
  </PickerWave>
);

/* ------------------------------------------------------------------ */
/* Page                                                                */
/* ------------------------------------------------------------------ */

export default function App() {
  return (
    <Shell>
      <GlobalStyle />
      <TopBar>
        <HelpButton>帮助</HelpButton>
        <Divider />
        <Transport>
          <ModeSwitch>
            <ModeButton>PAT</ModeButton>
            <ModeButton $on>SONG</ModeButton>
          </ModeSwitch>
          <TransportButton aria-label="播放"><Tri s={7} /></TransportButton>
          <TransportButton aria-label="停止"><svg width="10" height="10"><rect width="10" height="10" fill="#c9d0d3" /></svg></TransportButton>
        </Transport>
        <RecordButton aria-label="录音"><svg width="12" height="12"><circle cx="6" cy="6" r="6" fill="#fb5f55" /></svg></RecordButton>
        <Group $pad="4px 6px 0 0">
          <ValueBox $w={68}>
            <ValueInput aria-label="速度" $size={23} $w={28} defaultValue="128" />
            <ValueInput aria-label="速度小数" $size={17} $w={27} defaultValue=".000" />
            <Spin />
          </ValueBox>
        </Group>
        <Divider />
        <Group $pad="0 6px 0 2px">
          <IconButton $w={38} $h={41} aria-label="节拍器">
            <svg width="30" height="22" viewBox="0 0 30 22" fill="none" stroke="#d3dfe3" strokeWidth="1.600">
              <path d="M1 17Q6 6 15 5Q24 6 29 17" /><path d="M15 3V20" strokeWidth="2" /><path d="M11 2H19L17 8H13Z" fill="#d3dfe3" stroke="none" />
            </svg>
          </IconButton>
        </Group>
        <TimePanel>
          <span>1:33:</span>
          <TimeSide>
            <TimeUnits>M:S:CS</TimeUnits>
            <div>75</div>
          </TimeSide>
        </TimePanel>
        <Group $pad="0 2px 0 4px"><Divider /></Group>
        <Scope>
          <svg width="78" height="41" viewBox="0 0 78 41"><path d="M11 41L12 35L14 32L15 38L17 41H20L21 31L22 29L24 31L26 34L28 33L30 37L33 36L36 39L39 38L42 34L44 32L46 30L48 32L50 37L52 41H57L58 39L59 41Z" fill="#c2d7da" /></svg>
        </Scope>
        <Group $pad="0 3px 0 3px">
          <MeterColumn>
            <Meter><MeterCell /><MeterCell /></Meter>
            <svg width="18" height="12" viewBox="0 0 18 12"><path d="M1 6Q9 -3 15 6Q9 14 1 6Z" fill="#343b40" /><circle cx="8" cy="6" r="3.500" fill="#596167" /><circle cx="8" cy="6" r="2" fill="#22282c" /></svg>
          </MeterColumn>
        </Group>
        <Divider />
        <Group $pad="3px 5px 0 4px">
          <IconButton $w={21} $h={36} aria-label="样式选择"><Tri s={5} /></IconButton>
          <ValueBox $w={59} $square>
            <ValueInput aria-label="样式" $size={24} $w={41} $right defaultValue="8" />
            <Spin />
          </ValueBox>
          <IconButton $w={21} $h={36} aria-label="新建样式"><Stroke s={12} w={3}><path d="M10 1V19M1 10H19" /></Stroke></IconButton>
        </Group>
        <Divider />
        <Group $gap={4} $pad="0 0 0 4px">
          <MixBtn name="播放列表"><path d="M10 0H18L14 5Z" fill="#d3dfe3" stroke="none" /><path d="M3 10H25V27H3Z" /><path d="M3 11H25" strokeWidth="3" /><path d="M6 23H11M11 20H16M16 17H22" strokeWidth="2.500" /></MixBtn>
          <MixBtn name="钢琴卷帘"><path d="M2 4H12V27H2V22H7V20H2V16H7V14H2V10H7V8H2Z" fill="#d3dfe3" stroke="none" /><path d="M14 21H19M18 15H23M21 9H27" strokeWidth="4" /></MixBtn>
          <MixBtn name="通道机架"><path d="M4 4H17V9H4ZM4 13H17V18H4ZM4 22H17V27H4ZM20 4H23V9H20ZM20 13H23V18H20ZM20 22H23V27H20Z" /></MixBtn>
          <MixBtn name="混音台"><path d="M9 1V30M19 1V30" /><path d="M5 12H12V19H5ZM16 12H23V19H16Z" fill="#434b51" /><path d="M6 15.500H11M17 15.500H22" /></MixBtn>
          <MixBtn name="旋钮"><path d="M10 5Q14 2 18 5L20 18Q14 22 8 18Z" fill="#d3dfe3" /><path d="M12 7V18M16 7V18" stroke="#434b51" /><path d="M6 17Q0 21 6 24Q14 28 22 24Q28 21 22 17" /></MixBtn>
          <MixBtn name="浏览器"><path d="M2 3H6L8 5H11V11H2ZM7 13V28M7 18H13M7 27H13" /><path d="M14 14L18 18L21 14L22 18L26 18.500L22 19L21 22L18 19L14 22ZM14 23L18 27L21 23L22 27L26 27.500L22 28L21 31L18 28L14 31Z" fill="#d3dfe3" stroke="none" /></MixBtn>
        </Group>
        <HintPanel>
          <HintRow><Dim>[DJ亦辰]</Dim>付豪 - 需要人陪.zip</HintRow>
          <HintRow $bright>
            84:09:00，持续 0:01:00
            <Spacer />
            <span>鼓足 - Part_1</span>
            <svg width="16" height="18" viewBox="0 0 16 18"><path d="M4 3Q8 -1 12 3L12 13H4Z" fill="#666d72" /><path d="M1 13Q8 19 15 13L12 11H4Z" fill="#777e83" /><path d="M7 4V12M10 4V12" stroke="#3d454b" /></svg>
          </HintRow>
        </HintPanel>
        <Group $pad="0 3px 0 4px"><Divider /></Group>
        <IconButton $w={37} $tone="teal" aria-label="商店">
          <Stroke s={18} w={1.7}><path d="M1 3H4L7 14H17M5 5H19L17 12H7M9 5L10 12M13 5V12M16 5L15 12M5 8.500H18" /><circle cx="8" cy="17.500" r="1.500" /><circle cx="16" cy="17.500" r="1.500" /></Stroke>
        </IconButton>
        <Group $pad="0 2px 0 3px"><Divider /></Group>
        <SavePanel>
          <SaveText><Dim>02/10</Dim><br />Save 67..</SaveText>
          <GlobeWrap>
            <svg width="22" height="22" viewBox="0 0 22 22"><circle cx="11" cy="11" r="9.500" fill="#566b6b" stroke="#b9cdd0" strokeWidth="1.500" /><path d="M5 5L11 3L12 8L8 11L9 15L5 13L3 9ZM14 10L19 11L16 17L12 19L11 14Z" fill="#c6d8da" /></svg>
            <Badge>1</Badge>
          </GlobeWrap>
        </SavePanel>
        <Group $pad="0 2px 0 5px"><Divider /></Group>
        <Group $gap={1} $pad="8px 4px 0 0">
          <IconButton $w={25} $h={25} aria-label="最小化"><WindowIcon kind="min" /></IconButton>
          <IconButton $w={25} $h={25} aria-label="还原"><WindowIcon kind="max" /></IconButton>
          <IconButton $w={25} $h={25} aria-label="关闭"><WindowIcon kind="close" /></IconButton>
        </Group>
      </TopBar>

      <TitleBar>
        {TOOLS.map((t) => <Tool key={t.name} aria-label={t.name} $w={t.w} $tone={t.tone}>{t.icon}</Tool>)}
        <Tool $w={37} aria-label="试听"><Stroke w={1.8}><path d="M2 7H5L10 2V18L5 13H2Z" /><path d="M13 4L19 10L13 16Z" fill="currentColor" stroke="none" /></Stroke></Tool>
        <Crumb>
          <span>播放列表 - Arrangement</span>
          <Tri s={5} c="#858d91" />
          <span>(无)</span>
          <Tri s={5} c="#858d91" />
        </Crumb>
        <Spacer />
        <Tool $w={23} aria-label="最小化播放列表"><svg width="10" height="13"><rect y="2" width="10" height="3" fill="#dfe7ea" /></svg></Tool>
        <Tool $w={23} aria-label="还原播放列表"><WindowIcon kind="max" /></Tool>
        <Tool $w={23} aria-label="关闭播放列表"><WindowIcon kind="close" /></Tool>
      </TitleBar>

      <Workspace>
        <Picker>
          <PickerTabs>
            <PlainButton $tone="#586066" aria-label="样式"><PianoIcon /></PlainButton>
            <PlainButton $tone="#e3e9eb" aria-label="音频"><WaveIcon w={26} /></PlainButton>
            <PlainButton $tone="#586066" aria-label="自动化"><AutoIcon /></PlainButton>
          </PickerTabs>
          <PickerBody>
            <PickerList>
              {PICKS.map((p, i) => (
                <li key={i}>
                  <PickerItem $c={p.c} aria-label={p.name || "片段"}>
                    <PickerShape kind={p.wave} />
                    <PickerName>{p.name}</PickerName>
                    <OnTop><PickWave /></OnTop>
                  </PickerItem>
                </li>
              ))}
            </PickerList>
            <Scroll $w={20}>
              <ScrollButton $h={17} aria-label="缩放"><svg width="3" height="7"><rect width="2" height="7" fill="#1e262b" /></svg></ScrollButton>
              <ScrollButton $h={17} aria-label="上移"><Chevron d={UP} /></ScrollButton>
              <Thumb $h={42} />
              <Spacer />
              <ScrollButton $h={17} aria-label="下移"><Chevron d={DOWN} /></ScrollButton>
            </Scroll>
          </PickerBody>
        </Picker>

        <Playlist>
          <PlaylistHead>
            <AddTrack aria-label="添加轨道">
              <TabShape width="38" height="50"><path d="M0 50L11 5Q13 0 18 0H38V50Z" fill="#4b5359" stroke="#262d33" /></TabShape>
              <PlusMark width="11" height="11"><path d="M5.500 0V11M0 5.500H11" stroke="#eef2f3" strokeWidth="2.500" /></PlusMark>
            </AddTrack>
            <ToolGrid>
              <PlainButton $tone="#e3e9eb" aria-label="音频焦点"><WaveIcon w={26} /></PlainButton>
              <PlainButton $tone="#8a9195" aria-label="自动化焦点"><AutoIcon /></PlainButton>
              <PlainButton $tone="#8a9195" aria-label="样式焦点"><PianoIcon /></PlainButton>
              <PlainButton $tone="#8a9195" aria-label="交叉淡化"><Stroke s={15} w={2}><path d="M2 1Q5 1 10 10Q15 19 18 19M18 1Q15 1 10 10Q5 19 2 19" /></Stroke></PlainButton>
              <PlainButton $tone="#8a9195" aria-label="吸附曲线"><Stroke s={15} w={2}><path d="M6 1V13Q6 19 1 19M2 15L19 3" /></Stroke></PlainButton>
              <PlainButton $tone="#e3e9eb" aria-label="拉伸"><Stroke s={14} w={2.5}><path d="M7 4L1 10L7 16M13 4L19 10L13 16M4 10H16" /></Stroke></PlainButton>
            </ToolGrid>
            <HeadRight>
              <MinimapRow>
                <MapButton aria-label="向左"><Chevron d={LEFT} /></MapButton>
                <Minimap><MiniMap /></Minimap>
                <MapButton aria-label="向右"><Chevron d={RIGHT} /></MapButton>
                <MapButton aria-label="缩放"><svg width="3" height="6"><rect width="2" height="6" fill="#1e262b" /></svg></MapButton>
              </MinimapRow>
              <RulerRow>
                <Ruler>
                  {Array.from({ length: 35 }, (_, i) => 1 + i * 4).map((n) => (
                    <RulerMark key={n} style={{ left: barX(n) - 21 }}>{n}</RulerMark>
                  ))}
                  <Marker style={{ left: barX(50) - 22 }} width="18" height="13" viewBox="0 0 18 13"><path d="M1 0H17V4L9 12L1 4Z" fill="#b0e165" stroke="#2e4416" /></Marker>
                </Ruler>
                <ScrollButton $h={24} $w={25} aria-label="轨道上移"><Chevron d={UP} /></ScrollButton>
              </RulerRow>
            </HeadRight>
          </PlaylistHead>
          <PlaylistBody>
            <Canvas>
              <Grid />
              {TRACKS.map((t, i) => (
                <TrackRow key={i}>
                  <TrackHead>
                    <span>Track {i + 1}</span>
                    <TrackFoot>...<Led aria-label={`轨道 ${i + 1} 开关`} /></TrackFoot>
                  </TrackHead>
                  <Lane>
                    {t.hits?.map((h) => <HitView key={h.at} {...h} row={i} />)}
                    {t.clips.map((c, j) => <ClipView key={j} c={c} />)}
                    <Playhead style={{ left: barX(50) - 1 }} />
                  </Lane>
                </TrackRow>
              ))}
            </Canvas>
            <Scroll $w={26}>
              <Thumb $h={40} />
              <Spacer />
              <ScrollButton $h={24} aria-label="轨道下移"><Chevron d={DOWN} /></ScrollButton>
            </Scroll>
          </PlaylistBody>
        </Playlist>
      </Workspace>
    </Shell>
  );
}
